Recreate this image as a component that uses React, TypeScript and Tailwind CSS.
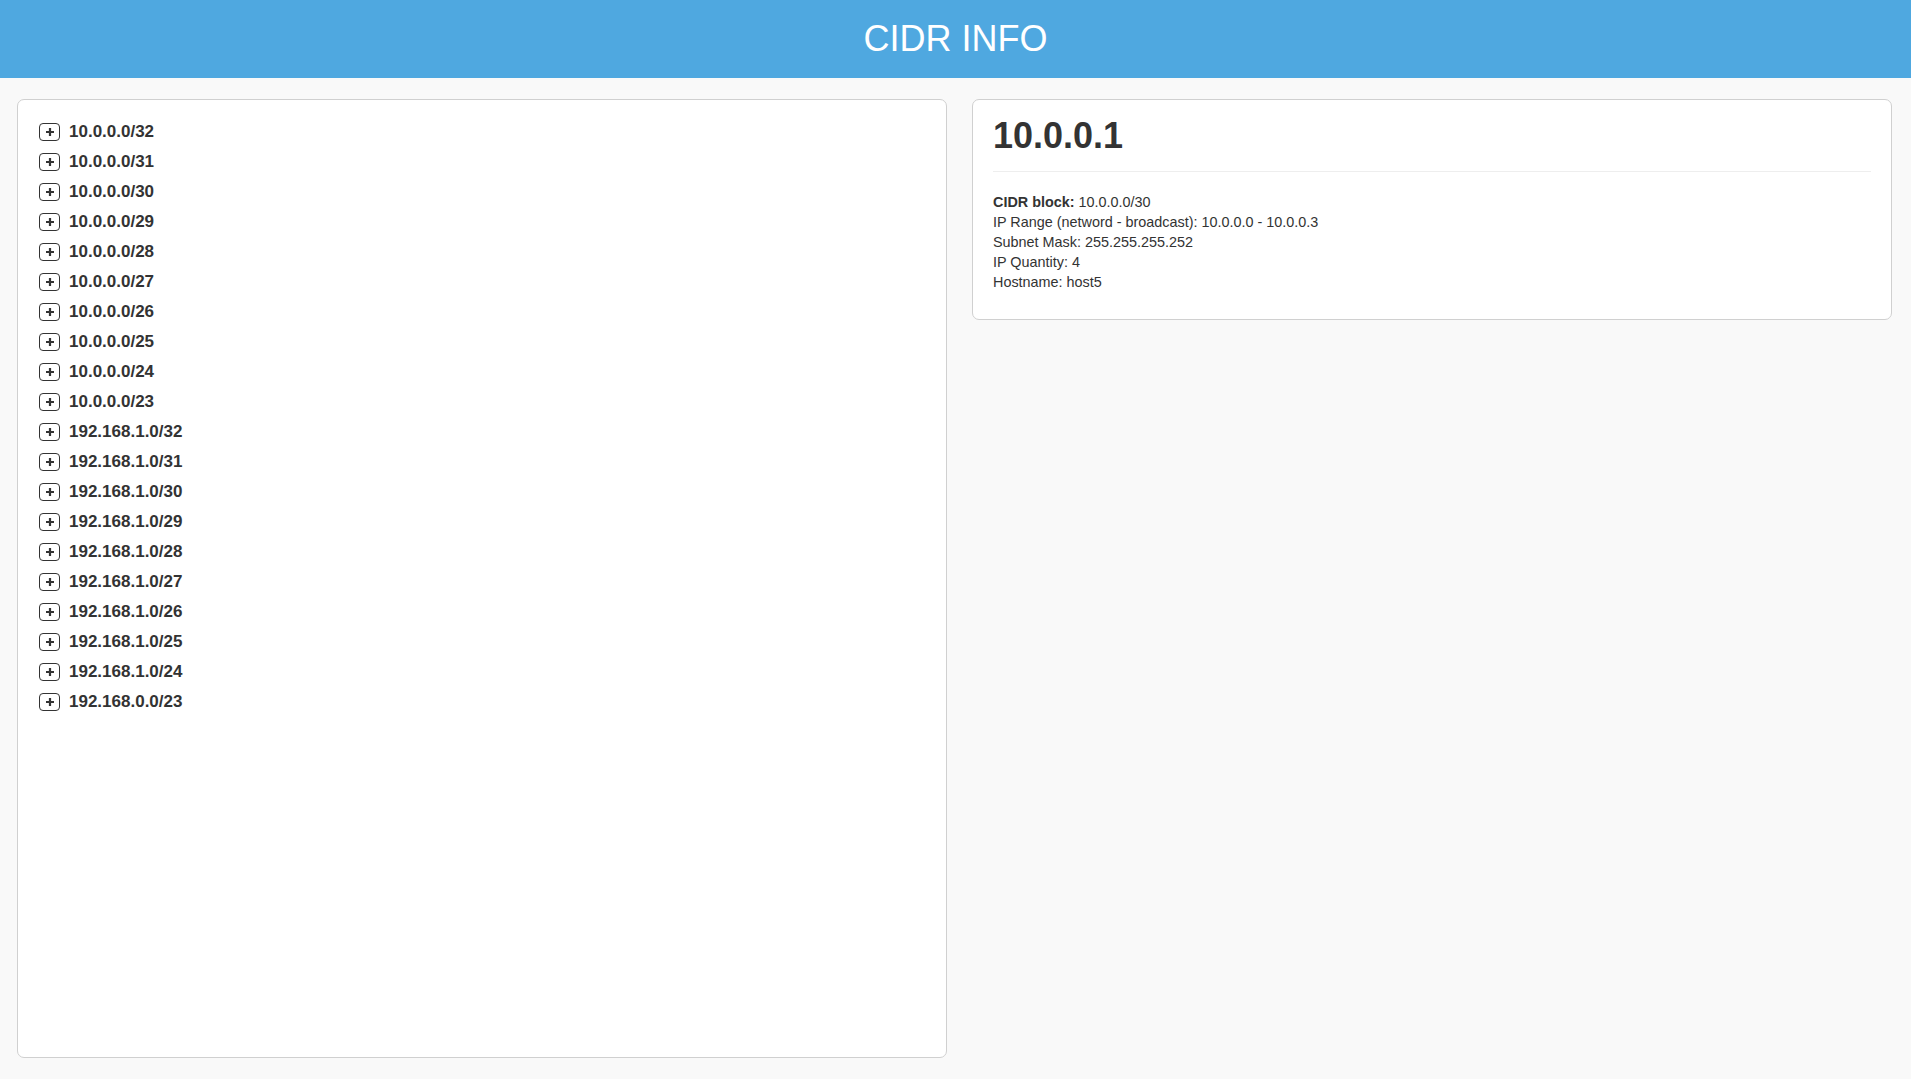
const cidrs = [
  '10.0.0.0/32',
  '10.0.0.0/31',
  '10.0.0.0/30',
  '10.0.0.0/29',
  '10.0.0.0/28',
  '10.0.0.0/27',
  '10.0.0.0/26',
  '10.0.0.0/25',
  '10.0.0.0/24',
  '10.0.0.0/23',
  '192.168.1.0/32',
  '192.168.1.0/31',
  '192.168.1.0/30',
  '192.168.1.0/29',
  '192.168.1.0/28',
  '192.168.1.0/27',
  '192.168.1.0/26',
  '192.168.1.0/25',
  '192.168.1.0/24',
  '192.168.0.0/23',
];

function PlusBox() {
  return (
    <span className="flex h-[18px] w-[21px] items-center justify-center rounded-[4px] border border-[#333]">
      <svg width="10" height="10" viewBox="0 0 10 10">
        <path d="M5 1v8M1 5h8" stroke="#333" strokeWidth="2.2" />
      </svg>
    </span>
  );
}

export default function App() {
  return (
    <div className="min-h-screen bg-[#f9f9f9] font-['Liberation_Sans',Arial,sans-serif] text-[#333]">
      <header className="flex h-[78px] items-center justify-center bg-[#4fa8e0]">
        <h1 className="text-[36px] leading-none text-white">CIDR INFO</h1>
      </header>

      <main className="flex gap-[25px] pl-[17px] pr-[19px] pt-[21px] pb-[21px]">
        <section className="h-[959px] w-[930px] shrink-0 rounded-[7px] border border-[#d0d0d0] bg-white px-[21px] pt-[17px]">
          <ul>
            {cidrs.map((c) => (
              <li key={c} className="flex h-[30px] items-center gap-[9px]">
                <PlusBox />
                <span className="text-[17px] font-bold">{c}</span>
              </li>
            ))}
          </ul>
        </section>

        <section className="h-[221px] flex-1 self-start rounded-[7px] border border-[#d0d0d0] bg-white px-[20px] pt-[15px]">
          <h2 className="border-b border-[#eee] pb-[14px] text-[36px] font-bold leading-[42px]">10.0.0.1</h2>
          <div className="pt-[20px] text-[14.4px] leading-[20px]">
            <div>
              <b>CIDR block:</b> 10.0.0.0/30
            </div>
            <div>IP Range (netword - broadcast): 10.0.0.0 - 10.0.0.3</div>
            <div>Subnet Mask: 255.255.255.252</div>
            <div>IP Quantity: 4</div>
            <div>Hostname: host5</div>
          </div>
        </section>
      </main>
    </div>
  );
}
